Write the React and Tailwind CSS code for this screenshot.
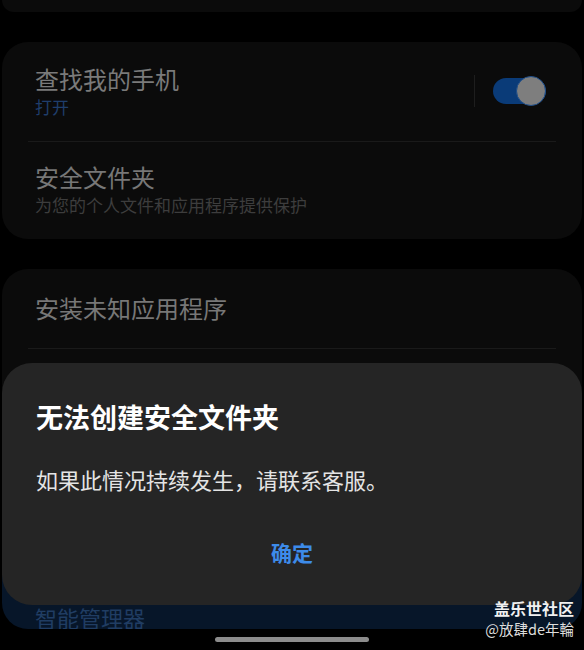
export default function App() {
  return (
    <div
      className="relative w-[584px] h-[650px] overflow-hidden bg-black"
      style={{ fontFamily: '"Noto Sans CJK SC", "Noto Sans", sans-serif' }}
    >
      {/* background settings list (dimmed) */}
      <div className="flex flex-col px-[2px]">
        <div className="h-[12px] rounded-b-[26px] bg-[#0b0b0b]" />

        <div className="mt-[30px] rounded-[26px] bg-[#0b0b0b]">
          <div className="flex items-center justify-between pl-[33px] pr-[36px] pt-[22px] pb-[23px]">
            <div>
              <p className="text-[24px] leading-[30px] text-[#7a7a7a]">查找我的手机</p>
              <p className="mt-[2px] text-[17px] leading-[22px] text-[#1f3e6b]">打开</p>
            </div>
            <div className="flex items-center gap-[18px]">
              <div className="w-px h-[32px] bg-[#1e1e1e]" />
              <div className="relative w-[53px] h-[26px] rounded-full bg-[#0a3b78]">
                <div className="absolute right-0 top-[-2px] w-[30px] h-[30px] rounded-full bg-[#7e7e7e] border border-[#1d4d8a]" />
              </div>
            </div>
          </div>
          <div className="mx-[26px] h-px bg-[#1a1a1a]" />
          <div className="px-[33px] pt-[20px] pb-[23px]">
            <p className="text-[24px] leading-[30px] text-[#777777]">安全文件夹</p>
            <p className="mt-[2px] text-[17px] leading-[22px] text-[#3d3d3d]">为您的个人文件和应用程序提供保护</p>
          </div>
        </div>

        <div className="mt-[30px] h-[290px] rounded-[26px] bg-[#0b0b0b]">
          <div className="px-[33px] pt-[23px] pb-[24px]">
            <p className="text-[24px] leading-[32px] text-[#777777]">安装未知应用程序</p>
          </div>
          <div className="mx-[26px] h-px bg-[#1a1a1a]" />
        </div>

        <div className="h-[70px] overflow-hidden rounded-b-[26px] bg-[#071629] px-[33px] pt-[43px]">
          <p className="text-[22px] leading-[30px] text-[#203d63]">智能管理器</p>
        </div>
      </div>

      {/* dialog */}
      <div className="absolute left-[2px] right-[2px] top-[363px] flex flex-col rounded-[30px] bg-[#252525] px-[34px] pt-[36px] pb-[38px]">
        <p className="text-[27px] leading-[36px] font-bold text-white">无法创建安全文件夹</p>
        <p className="mt-[29px] text-[22px] leading-[30px] text-[#e4e4e4]">如果此情况持续发生，请联系客服。</p>
        <p className="mt-[43px] text-center text-[21px] leading-[30px] font-bold text-[#3d8be9]">确定</p>
      </div>

      {/* watermark */}
      <div className="absolute right-[10px] top-[597px] flex flex-col items-end">
        <p className="text-[16px] leading-[22px] font-bold text-[#f0f0f0]">盖乐世社区</p>
        <p className="text-[14.5px] leading-[20px] text-[#dddddd]">@放肆de年輪</p>
      </div>

      {/* home indicator */}
      <div className="absolute left-[215px] top-[637px] w-[154px] h-[5px] rounded-full bg-[#8c8c8c]" />
    </div>
  )
}
